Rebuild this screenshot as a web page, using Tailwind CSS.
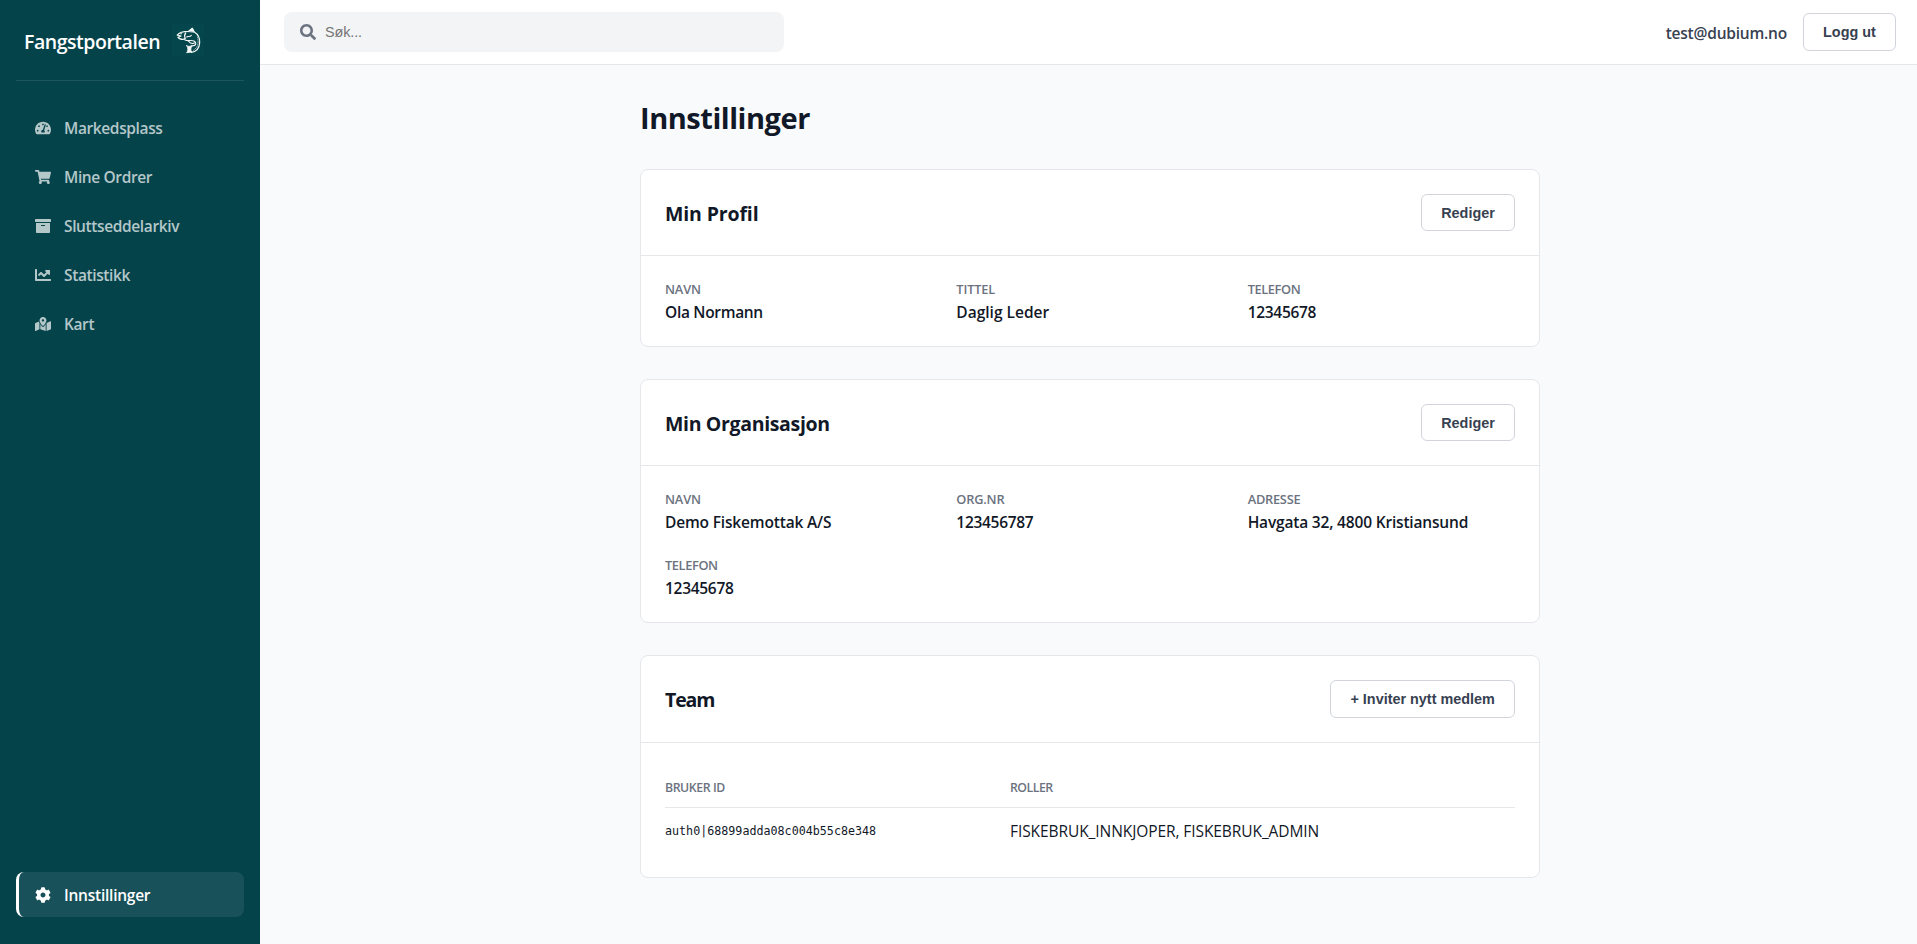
<!DOCTYPE html>
<html lang="no">
<head>
<meta charset="utf-8">
<title>Fangstportalen – Innstillinger</title>
<script src="https://cdn.jsdelivr.net/npm/@tailwindcss/browser@4"></script>
</head>
<body class="flex h-screen overflow-hidden bg-[#f9fafc] font-['Open_Sans',sans-serif] text-[#111827]">

<aside class="flex w-[260px] shrink-0 flex-col bg-[#05434b] px-4 pt-4 pb-[27px]">
  <div class="flex h-[65px] items-center gap-3 border-b border-white/10 pl-2 pb-4">
    <span class="w-[136px] pt-[3px] text-[19.5px] leading-7 font-semibold tracking-[-0.47px] whitespace-nowrap text-white">Fangstportalen</span>
    <svg class="size-8 bg-[#04464b]" viewBox="516 72 96 96" fill="none" stroke="#f4f8f7" stroke-linecap="round" stroke-linejoin="round">
      <path d="M532 105C537 98 548 94 566 94L577 85L583 96C594 103 600 116 599 128C598 145 588 155 574 157" stroke-width="3.6"/>
      <path d="M565 94L577 85L582 96Z" fill="#f4f8f7" stroke-width="2"/>
      <path d="M532 105L543 108L534 112C539 119 550 119 556 116C553 110 553 104 557 99" stroke-width="3.8"/>
      <path d="M542 101h3M560 111C564 107 569 113 574 106M553 119C561 126 570 118 582 123C590 128 590 136 577 138M566 124C570 129 577 132 583 129" stroke-width="3.2"/>
      <path d="M560 137C565 141 571 139 577 136C572 143 571 151 575 156L560 158C565 152 565 144 560 137Z" fill="#f4f8f7" stroke-width="2.5"/>
      <path d="M592 111C597 126 594 142 581 151" stroke-width="2" stroke-dasharray="3 4"/>
    </svg>
  </div>

  <nav class="mt-6 flex grow flex-col gap-1 text-[15.5px] leading-[21px] font-semibold tracking-[-0.38px] text-[#b4c7c9]">
    <a class="flex h-[45px] items-center gap-[13px] rounded-lg border-l-3 border-transparent px-4">
      <svg class="size-4 shrink-0" viewBox="0 0 576 512" fill="currentColor"><path d="M288 32C128.94 32 0 160.94 0 320c0 52.8 14.25 102.26 39.06 144.8 5.61 9.62 16.3 15.2 27.44 15.2h443c11.14 0 21.83-5.58 27.44-15.2C561.75 422.26 576 372.8 576 320c0-159.06-128.94-288-288-288zm0 64c14.71 0 26.58 10.13 30.32 23.65-1.11 2.26-2.64 4.23-3.45 6.67l-9.22 27.67c-5.13 3.49-10.97 6.01-17.64 6.01-17.67 0-32-14.33-32-32S270.33 96 288 96zM96 384c-17.67 0-32-14.33-32-32s14.33-32 32-32 32 14.33 32 32-14.33 32-32 32zm48-160c-17.67 0-32-14.33-32-32s14.33-32 32-32 32 14.33 32 32-14.33 32-32 32zm246.77-72.41l-61.33 184C343.13 347.33 352 364.54 352 384c0 11.72-3.38 22.55-8.88 32H232.88c-5.5-9.45-8.88-20.28-8.88-32 0-33.94 26.5-61.43 59.9-63.59l61.34-184.01c4.17-12.56 17.73-19.45 30.36-15.17 12.57 4.19 19.35 17.79 15.17 30.36zm14.66 57.2l15.52-46.55c3.47-1.29 7.13-2.23 11.05-2.23 17.67 0 32 14.33 32 32s-14.33 32-32 32c-11.38-.01-20.89-6.28-26.57-15.22zM480 384c-17.67 0-32-14.33-32-32s14.33-32 32-32 32 14.33 32 32-14.33 32-32 32z"/></svg>
      <span class="pt-0.5">Markedsplass</span>
    </a>
    <a class="flex h-[45px] items-center gap-[13px] rounded-lg border-l-3 border-transparent px-4">
      <svg class="size-4 shrink-0" viewBox="0 0 576 512" fill="currentColor"><path d="M528.12 301.319l47.273-208C578.806 78.301 567.391 64 551.99 64H159.208l-9.166-44.81C147.758 8.021 137.93 0 126.529 0H24C10.745 0 0 10.745 0 24v16c0 13.255 10.745 24 24 24h69.883l70.248 343.435C147.325 417.1 136 435.222 136 456c0 30.928 25.072 56 56 56s56-25.072 56-56c0-15.674-6.447-29.835-16.824-40h209.647C430.447 426.165 424 440.326 424 456c0 30.928 25.072 56 56 56s56-25.072 56-56c0-22.172-12.888-41.332-31.579-50.405l5.517-24.276c3.413-15.018-8.002-29.319-23.403-29.319H218.117l-6.545-32h293.145c11.206 0 20.92-7.754 23.403-18.681z"/></svg>
      <span class="pt-0.5">Mine Ordrer</span>
    </a>
    <a class="flex h-[45px] items-center gap-[13px] rounded-lg border-l-3 border-transparent px-4">
      <svg class="size-4 shrink-0" viewBox="0 0 512 512" fill="currentColor"><path d="M32 448c0 17.7 14.3 32 32 32h384c17.7 0 32-14.3 32-32V160H32v288zm160-212c0-6.6 5.4-12 12-12h104c6.6 0 12 5.4 12 12v8c0 6.6-5.4 12-12 12H204c-6.6 0-12-5.4-12-12v-8zM480 32H32C14.3 32 0 46.3 0 64v48c0 8.8 7.2 16 16 16h480c8.8 0 16-7.2 16-16V64c0-17.7-14.3-32-32-32z"/></svg>
      <span class="pt-0.5">Sluttseddelarkiv</span>
    </a>
    <a class="flex h-[45px] items-center gap-[13px] rounded-lg border-l-3 border-transparent px-4">
      <svg class="size-4 shrink-0" viewBox="0 0 512 512" fill="currentColor"><path d="M496 384H64V80c0-8.84-7.16-16-16-16H16C7.16 64 0 71.16 0 80v336c0 17.67 14.33 32 32 32h464c8.84 0 16-7.16 16-16v-32c0-8.84-7.16-16-16-16zM464 96H345.94c-21.38 0-32.09 25.85-16.97 40.97l32.4 32.4L288 242.75l-73.37-73.37c-12.5-12.5-32.76-12.5-45.25 0l-68.69 68.69c-6.25 6.25-6.25 16.38 0 22.63l22.62 22.62c6.25 6.25 16.38 6.25 22.63 0L192 237.25l73.37 73.37c12.5 12.5 32.76 12.5 45.25 0l96-96 32.4 32.4c15.12 15.12 40.97 4.41 40.97-16.97V112c.01-8.84-7.15-16-15.99-16z"/></svg>
      <span class="pt-0.5">Statistikk</span>
    </a>
    <a class="flex h-[45px] items-center gap-[13px] rounded-lg border-l-3 border-transparent px-4">
      <svg class="size-4 shrink-0" viewBox="0 0 576 512" fill="currentColor"><path d="M288 0c-69.59 0-126 56.41-126 126 0 56.26 82.35 158.8 113.9 196.02 6.39 7.54 17.82 7.54 24.2 0C331.65 284.8 414 182.26 414 126 414 56.41 357.59 0 288 0zm0 168c-23.2 0-42-18.8-42-42s18.8-42 42-42 42 18.8 42 42-18.8 42-42 42zM20.12 215.95A32.006 32.006 0 0 0 0 245.66v250.32c0 11.32 11.43 19.06 21.94 14.86L160 448V214.92c-8.84-15.98-16.07-31.54-21.25-46.42L20.12 215.95zM288 359.67c-14.07 0-27.38-6.18-36.51-16.96-19.66-23.2-40.57-49.62-59.49-76.72v182l192 64V266c-18.92 27.09-39.82 53.52-59.49 76.72-9.13 10.77-22.44 16.95-36.51 16.95zm266.06-198.51L416 224v288l139.88-55.95A31.996 31.996 0 0 0 576 426.34V176.02c0-11.32-11.43-19.06-21.94-14.86z"/></svg>
      <span class="pt-0.5">Kart</span>
    </a>
    <a class="mt-auto flex h-[45px] items-center gap-[13px] rounded-lg border-l-3 border-white bg-white/8 px-4 text-white">
      <svg class="size-4 shrink-0" viewBox="0 0 512 512" fill="currentColor"><path d="M487.4 315.7l-42.6-24.6c4.3-23.2 4.3-47 0-70.2l42.6-24.6c4.9-2.8 7.1-8.6 5.5-14-11.1-35.6-30-67.8-54.7-94.6-3.8-4.1-10-5.1-14.8-2.3L380.8 110c-17.9-15.4-38.5-27.3-60.8-35.1V25.8c0-5.6-3.9-10.5-9.4-11.7-36.7-8.2-74.3-7.8-109.2 0-5.5 1.2-9.4 6.1-9.4 11.7V75c-22.2 7.9-42.8 19.8-60.8 35.1L88.7 85.5c-4.9-2.8-11-1.9-14.8 2.3-24.7 26.7-43.6 58.9-54.7 94.6-1.7 5.4.6 11.2 5.5 14L67.3 221c-4.3 23.2-4.3 47 0 70.2l-42.6 24.6c-4.9 2.8-7.1 8.6-5.5 14 11.1 35.6 30 67.8 54.7 94.6 3.8 4.1 10 5.1 14.8 2.3l42.6-24.6c17.9 15.4 38.5 27.3 60.8 35.1v49.2c0 5.6 3.9 10.5 9.4 11.7 36.7 8.2 74.3 7.8 109.2 0 5.5-1.2 9.4-6.1 9.4-11.7v-49.2c22.2-7.9 42.8-19.8 60.8-35.1l42.6 24.6c4.9 2.8 11 1.9 14.8-2.3 24.7-26.7 43.6-58.9 54.7-94.6 1.5-5.5-.7-11.3-5.6-14.1zM256 336c-44.1 0-80-35.9-80-80s35.9-80 80-80 80 35.9 80 80-35.9 80-80 80z"/></svg>
      <span class="pt-0.5 tracking-[-0.24px]">Innstillinger</span>
    </a>
  </nav>
</aside>

<div class="flex grow flex-col">
  <header class="flex h-[65px] shrink-0 items-center justify-between border-b border-[#e5e7eb] bg-white pr-[21px] pl-6">
    <div class="flex h-10 w-[500px] items-center gap-[9px] rounded-lg bg-[#f3f4f6] px-4">
      <svg class="size-4 shrink-0 text-[#6b7280]" viewBox="0 0 512 512" fill="currentColor"><path d="M505 442.7L405.3 343c-4.5-4.5-10.6-7-17-7H372c27.6-35.3 44-79.7 44-128C416 93.1 322.9 0 208 0S0 93.1 0 208s93.1 208 208 208c48.3 0 92.7-16.4 128-44v16.3c0 6.4 2.5 12.5 7 17l99.7 99.7c9.4 9.4 24.6 9.4 33.9 0l28.3-28.3c9.4-9.4 9.4-24.6.1-34zM208 336c-70.7 0-128-57.2-128-128 0-70.7 57.2-128 128-128 70.7 0 128 57.2 128 128 0 70.7-57.2 128-128 128z"/></svg>
      <span class="font-['Liberation_Sans',sans-serif] text-[14.4px] leading-4 tracking-[-0.1px] text-[#757575]">Søk...</span>
    </div>
    <div class="flex items-center gap-4">
      <span class="pt-0.5 text-[15.5px] leading-[21px] font-semibold tracking-[-0.22px] text-[#374151]">test@dubium.no</span>
      <button class="h-[38px] rounded-md border border-[#d1d5db] bg-white px-[19.2px] font-['Liberation_Sans',sans-serif] text-[14.4px] leading-4 font-bold text-[#374151]">Logg ut</button>
    </div>
  </header>

  <main class="flex grow justify-center pt-[33px] pl-[3px]">
    <div class="flex w-[900px] flex-col">
      <h1 class="mb-[31px] text-[29px] leading-10 font-bold tracking-[-0.46px]">Innstillinger</h1>

      <section class="mb-8 rounded-lg border border-[#e5e7eb] bg-white">
        <div class="flex items-center justify-between border-b border-[#e5e7eb] p-6">
          <h2 class="pt-0.5 text-[19.5px] leading-7 font-bold tracking-[-0.14px]">Min Profil</h2>
          <button class="h-[37px] rounded-md border border-[#d1d5db] bg-white px-[19.2px] font-['Liberation_Sans',sans-serif] text-[14.4px] leading-4 font-bold text-[#374151]">Rediger</button>
        </div>
        <dl class="grid grid-cols-3 gap-6 px-6 pt-[25px] pb-[23px] text-[15.5px] leading-[21px] font-semibold">
          <div><dt class="mb-1 text-[12.8px] leading-[17px] tracking-[-0.15px] text-[#6b7280]">NAVN</dt><dd class="tracking-[-0.31px]">Ola Normann</dd></div>
          <div><dt class="mb-1 text-[12.8px] leading-[17px] tracking-[-0.15px] text-[#6b7280]">TITTEL</dt><dd>Daglig Leder</dd></div>
          <div><dt class="mb-1 text-[12.8px] leading-[17px] tracking-[-0.38px] text-[#6b7280]">TELEFON</dt><dd class="tracking-[-0.3px]">12345678</dd></div>
        </dl>
      </section>

      <section class="mb-8 rounded-lg border border-[#e5e7eb] bg-white">
        <div class="flex items-center justify-between border-b border-[#e5e7eb] p-6">
          <h2 class="pt-0.5 text-[19.5px] leading-7 font-bold tracking-[-0.34px]">Min Organisasjon</h2>
          <button class="h-[37px] rounded-md border border-[#d1d5db] bg-white px-[19.2px] font-['Liberation_Sans',sans-serif] text-[14.4px] leading-4 font-bold text-[#374151]">Rediger</button>
        </div>
        <dl class="grid grid-cols-3 gap-6 px-6 pt-[25px] pb-[23px] text-[15.5px] leading-[21px] font-semibold">
          <div><dt class="mb-1 text-[12.8px] leading-[17px] tracking-[-0.15px] text-[#6b7280]">NAVN</dt><dd class="tracking-[-0.17px]">Demo Fiskemottak A/S</dd></div>
          <div><dt class="mb-1 text-[12.8px] leading-[17px] tracking-[-0.2px] text-[#6b7280]">ORG.NR</dt><dd class="tracking-[-0.3px]">123456787</dd></div>
          <div><dt class="mb-1 text-[12.8px] leading-[17px] tracking-[-0.24px] text-[#6b7280]">ADRESSE</dt><dd class="tracking-[-0.18px]">Havgata 32, 4800 Kristiansund</dd></div>
          <div><dt class="mb-1 text-[12.8px] leading-[17px] tracking-[-0.38px] text-[#6b7280]">TELEFON</dt><dd class="tracking-[-0.3px]">12345678</dd></div>
        </dl>
      </section>

      <section class="rounded-lg border border-[#e5e7eb] bg-white">
        <div class="flex items-center justify-between border-b border-[#e5e7eb] p-6">
          <h2 class="pt-0.5 text-[19.5px] leading-7 font-bold tracking-[-1.1px]">Team</h2>
          <button class="h-[38px] rounded-md border border-[#d1d5db] bg-white px-[19.2px] font-['Liberation_Sans',sans-serif] text-[14.4px] leading-4 font-bold text-[#374151]">+ Inviter nytt medlem</button>
        </div>
        <div class="p-6">
          <div class="grid h-[41px] grid-cols-[345px_1fr] items-center border-b border-[#e5e7eb] text-[12.3px] leading-[17px] font-semibold text-[#6b7280]">
            <span class="tracking-[-0.42px]">BRUKER ID</span><span class="tracking-[-0.5px]">ROLLER</span>
          </div>
          <div class="grid h-[45px] grid-cols-[345px_1fr] items-center">
            <span class="font-['DejaVu_Sans_Mono',monospace] text-[11.7px] leading-4">auth0|68899adda08c004b55c8e348</span>
            <span class="pt-0.5 text-[15.5px] leading-[21px] tracking-[-0.08px]">FISKEBRUK_INNKJOPER, FISKEBRUK_ADMIN</span>
          </div>
        </div>
      </section>
    </div>
  </main>
</div>
</body>
</html>
